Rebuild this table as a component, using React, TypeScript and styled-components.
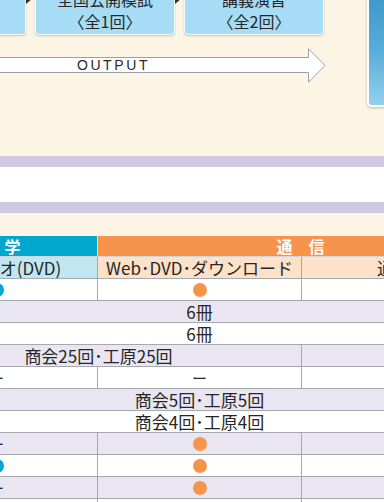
import React from "react";
import styled, { createGlobalStyle } from "styled-components";

const Global = createGlobalStyle`
  html, body { margin: 0; padding: 0; background: #fcf4e4; }
  body { font-family: "Noto Sans CJK JP", "Noto Sans", sans-serif; }
`;

const Page = styled.div`
  width: 384px;
  height: 502px;
  overflow: hidden;
  background: #fcf4e4;
  color: #2b2b2b;
  font-family: "Noto Sans CJK JP", "Noto Sans", sans-serif;
`;

const TopArea = styled.div`
  display: flex;
  justify-content: space-between;
  align-items: flex-start;
`;

const Flow = styled.div`
  display: flex;
  flex-direction: column;
  margin-left: -114px;
`;

const Steps = styled.div`
  display: flex;
  align-items: flex-start;
  margin-top: -19px;
`;

const StepBox = styled.div`
  width: 140px;
  height: 54px;
  flex: none;
  box-sizing: border-box;
  padding: 6px 0 4px;
  background: #a6dcf5;
  border: 1px solid #f4fbff;
  border-radius: 4px;
  box-shadow: 0 1px 2px rgba(0, 0, 0, 0.2);
  text-align: center;
  font-size: 16px;
  line-height: 22px;
  color: #262626;
`;

const Connector = styled.div`
  width: 9px;
  flex: none;
  display: flex;
  padding-top: 11px;
`;

const ArrowWrap = styled.div`
  position: relative;
  width: 428px;
  height: 35px;
  margin: 13px 0 0 12px;
`;

const ArrowLabel = styled.span`
  position: absolute;
  left: 0;
  right: 0;
  top: 9px;
  height: 16px;
  display: flex;
  align-items: center;
  justify-content: center;
  padding-left: 3px;
  font-family: "Liberation Sans", Arial, sans-serif;
  font-size: 14px;
  letter-spacing: 2.6px;
  color: #2a2a2a;
`;

const Panel = styled.div`
  width: 30px;
  height: 127px;
  flex: none;
  margin: -20px -13px 0 0;
  box-sizing: border-box;
  border: 2px solid #fff;
  border-radius: 5px;
  background: linear-gradient(180deg, #3891c9 0%, #58acd9 55%, #93d0ea 100%);
  box-shadow: 0 1px 3px rgba(0, 0, 0, 0.25);
`;

const Band = styled.div`
  margin-top: 49px;
  height: 57px;
  box-sizing: border-box;
  border-top: 11px solid #d1c8e2;
  border-bottom: 11px solid #d1c8e2;
  background: #fff;
`;

const Table = styled.div`
  margin: 23px 0 0 -104px;
  width: 608px;
`;

const Row = styled.div<{ $bg?: string; $head?: boolean }>`
  display: grid;
  grid-template-columns: 202px 204px 202px;
  height: ${(p) => (p.$head ? 21 : 22)}px;
  box-sizing: border-box;
  border-bottom: 1px solid ${(p) => (p.$head ? "#d2d4d8" : "#a4a9b0")};
  background: ${(p) => p.$bg || "#fff"};
`;

const Cell = styled.div<{ $span?: number; $bg?: string; $line?: string; $head?: boolean }>`
  grid-column: span ${(p) => p.$span || 1};
  display: flex;
  align-items: center;
  justify-content: center;
  box-sizing: border-box;
  border-right: 1px solid ${(p) => p.$line || "#a4a9b0"};
  background: ${(p) => p.$bg || "transparent"};
  font-size: ${(p) => (p.$head ? 16 : 17)}px;
  line-height: 1;
  white-space: nowrap;
  color: ${(p) => (p.$head ? "#fff" : "#262626")};
  font-weight: ${(p) => (p.$head ? 700 : 400)};
`;

const Dash = styled.span`
  font-size: 15px;
  line-height: 1;
`;

const Dot = styled.span<{ $color: string }>`
  width: 14px;
  height: 14px;
  border-radius: 50%;
  background: ${(p) => p.$color};
`;

const BLUE = "#00a8cd";
const ORANGE = "#f7944b";
const LAV = "#e9e5f1";

const Tri = () => (
  <svg width="7" height="12" viewBox="0 0 7 12">
    <polygon points="0,0 7,6 0,12" fill="#2e2e2e" />
  </svg>
);

export default function App() {
  return (
    <Page>
      <Global />
      <TopArea>
        <Flow>
          <Steps>
            <StepBox>
              基礎講義
              <br />
              〈全12回〉
            </StepBox>
            <Connector>
              <Tri />
            </Connector>
            <StepBox>
              全国公開模試
              <br />
              〈全1回〉
            </StepBox>
            <Connector>
              <Tri />
            </Connector>
            <StepBox>
              講義演習
              <br />
              〈全2回〉
            </StepBox>
          </Steps>
          <ArrowWrap>
            <svg width="428" height="35" viewBox="0 0 428 35">
              <polygon
                points="0.5,9.5 410.5,9.5 410.5,0.8 427,17.5 410.5,34.2 410.5,24.5 0.5,24.5"
                fill="#ffffff"
                stroke="#9aa0a7"
                strokeWidth="1"
              />
            </svg>
            <ArrowLabel>OUTPUT</ArrowLabel>
          </ArrowWrap>
        </Flow>
        <Panel />
      </TopArea>
      <Band />
      <Table>
        <Row $head>
          <Cell $head $bg={BLUE} $line="#e8eef2">
            通　学
          </Cell>
          <Cell $head $span={2} $bg={ORANGE} $line={ORANGE}>
            通　信
          </Cell>
        </Row>
        <Row>
          <Cell $bg="#c0e6f1">講義ビデオ(DVD)</Cell>
          <Cell $bg="#fde1c8">Web･DVD･ダウンロード</Cell>
          <Cell $bg="#fde1c8">通信制</Cell>
        </Row>
        <Row>
          <Cell>
            <Dot $color={BLUE} />
          </Cell>
          <Cell>
            <Dot $color={ORANGE} />
          </Cell>
          <Cell />
        </Row>
        <Row $bg={LAV}>
          <Cell $span={3}>6冊</Cell>
        </Row>
        <Row>
          <Cell $span={3}>6冊</Cell>
        </Row>
        <Row $bg={LAV}>
          <Cell $span={2}>商会25回･工原25回</Cell>
          <Cell />
        </Row>
        <Row>
          <Cell>
            <Dash>ー</Dash>
          </Cell>
          <Cell>
            <Dash>ー</Dash>
          </Cell>
          <Cell />
        </Row>
        <Row $bg={LAV}>
          <Cell $span={3}>商会5回･工原5回</Cell>
        </Row>
        <Row>
          <Cell $span={3}>商会4回･工原4回</Cell>
        </Row>
        <Row $bg={LAV}>
          <Cell>
            <Dash>ー</Dash>
          </Cell>
          <Cell>
            <Dot $color={ORANGE} />
          </Cell>
          <Cell />
        </Row>
        <Row>
          <Cell>
            <Dot $color={BLUE} />
          </Cell>
          <Cell>
            <Dot $color={ORANGE} />
          </Cell>
          <Cell />
        </Row>
        <Row $bg={LAV}>
          <Cell>
            <Dash>ー</Dash>
          </Cell>
          <Cell>
            <Dot $color={ORANGE} />
          </Cell>
          <Cell />
        </Row>
        <Row>
          <Cell />
          <Cell />
          <Cell />
        </Row>
      </Table>
    </Page>
  );
}
